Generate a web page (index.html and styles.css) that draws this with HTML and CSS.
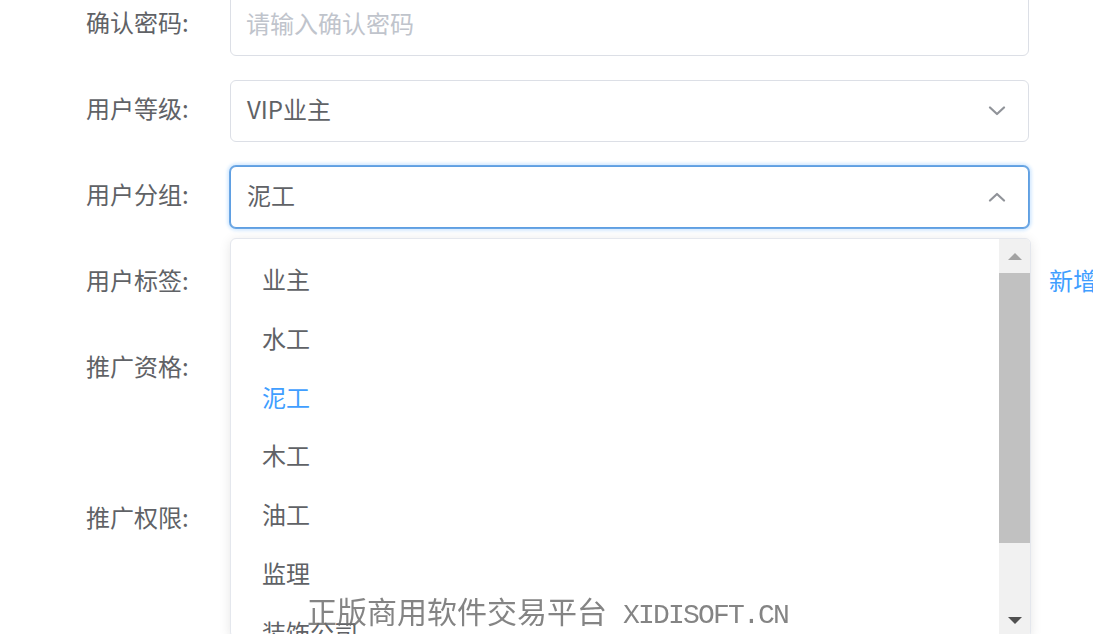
FILE: index.html
```html
<!DOCTYPE html>
<html lang="zh-CN">
<head>
    <meta charset="UTF-8" />
    <meta name="viewport" content="width=device-width, initial-scale=1.0"/>
    <title>编辑用户</title>
    <link rel="stylesheet" href="styles.css">
</head>
<body>
    <form class="user-form">
        <div class="form-row">
            <label class="form-label" for="confirmPassword">确认密码:</label>
            <div class="form-control">
                <input type="password" id="confirmPassword" class="text-input" placeholder="请输入确认密码" />
            </div>
        </div>

        <div class="form-row">
            <label class="form-label">用户等级:</label>
            <div class="form-control">
                <div class="select-box">
                    <span class="select-value">VIP业主</span>
                    <svg class="select-arrow" width="18" height="10" viewBox="0 0 18 10">
                        <polyline points="2,1.5 9,8 16,1.5" fill="none" stroke="#909399" stroke-width="2.2" stroke-linecap="round" stroke-linejoin="round"/>
                    </svg>
                </div>
            </div>
        </div>

        <div class="form-row">
            <label class="form-label">用户分组:</label>
            <div class="form-control">
                <div class="select-box is-focus">
                    <span class="select-value">泥工</span>
                    <svg class="select-arrow" width="18" height="10" viewBox="0 0 18 10">
                        <polyline points="2,8.5 9,2 16,8.5" fill="none" stroke="#909399" stroke-width="2.2" stroke-linecap="round" stroke-linejoin="round"/>
                    </svg>
                </div>

                <!-- open dropdown -->
                <div class="dropdown">
                    <ul class="dropdown-list">
                        <li class="dropdown-item">业主</li>
                        <li class="dropdown-item">水工</li>
                        <li class="dropdown-item selected">泥工</li>
                        <li class="dropdown-item">木工</li>
                        <li class="dropdown-item">油工</li>
                        <li class="dropdown-item">监理</li>
                        <li class="dropdown-item">装饰公司</li>
                    </ul>
                    <div class="scrollbar">
                        <div class="scroll-btn"><span class="tri-up"></span></div>
                        <div class="scroll-thumb"></div>
                        <div class="scroll-track"></div>
                        <div class="scroll-btn"><span class="tri-down"></span></div>
                    </div>
                </div>
            </div>
        </div>

        <div class="form-row">
            <label class="form-label">用户标签:</label>
            <div class="form-control">
                <div class="select-box"></div>
            </div>
            <a class="add-link" href="#">新增</a>
        </div>

        <div class="form-row tall">
            <label class="form-label">推广资格:</label>
            <div class="form-control"></div>
        </div>

        <div class="form-row">
            <label class="form-label">推广权限:</label>
            <div class="form-control"></div>
        </div>
    </form>

    <div class="watermark">正版商用软件交易平台<span class="watermark-latin">XIDISOFT.CN</span></div>
</body>
</html>
```

FILE: styles.css
```css
/* Reset and base styles */
* {
    box-sizing: border-box;
    margin: 0;
    padding: 0;
}

html, body {
    height: 634px;
    overflow: hidden;
}

body {
    font-family: "Noto Sans CJK SC", "Noto Sans", sans-serif;
    background-color: #ffffff;
    color: #606266;
}

.user-form {
    margin-top: -6px;
    padding-left: 86px;
}

.form-row {
    display: flex;
    align-items: flex-start;
    height: 62px;
    margin-bottom: 24px;
}

.form-row.tall {
    height: 127px;
}

.form-label {
    width: 144px;
    flex-shrink: 0;
    font-size: 24px;
    line-height: 56px;
    color: #606266;
}

.form-control {
    position: relative;
    flex-shrink: 0;
    width: 799px;
    height: 62px;
}

.text-input,
.select-box {
    width: 100%;
    height: 62px;
    padding: 0 15px 5px;
    border: 1px solid #dcdfe6;
    border-radius: 6px;
    background-color: #ffffff;
    font-family: inherit;
    font-size: 24px;
    color: #606266;
    outline: none;
}

.text-input::placeholder {
    color: #c0c4cc;
}

.select-box {
    display: flex;
    align-items: center;
    justify-content: space-between;
    padding: 0 22px 0 16px;
}

.select-box.is-focus {
    border-color: #5f9fe2;
    box-shadow: 0 0 0 1px #6aa6e4, 0 0 3px 3px rgba(64, 158, 255, 0.2);
}

.select-value {
    line-height: 1;
    margin-top: -5px;
}

.add-link {
    flex-shrink: 0;
    margin-left: 20px;
    font-size: 24px;
    line-height: 56px;
    color: #409eff;
    text-decoration: none;
    white-space: nowrap;
}

/* Dropdown panel */
.dropdown {
    position: absolute;
    top: 72px;
    left: 0;
    z-index: 10;
    display: flex;
    width: 801px;
    height: 400px;
    background-color: #ffffff;
    border: 1px solid #e4e7ed;
    border-radius: 6px;
    box-shadow: 0 2px 12px 0 rgba(0, 0, 0, 0.1);
    overflow: hidden;
}

.dropdown-list {
    flex: 1;
    list-style: none;
    padding-top: 11px;
    overflow: hidden;
}

.dropdown-item {
    height: 58.8px;
    padding: 0 31px;
    font-size: 24px;
    line-height: 58px;
    color: #606266;
}

.dropdown-item.selected {
    color: #409eff;
}

.scrollbar {
    display: flex;
    flex-direction: column;
    width: 31px;
    background-color: #f1f1f1;
}

.scroll-btn {
    display: flex;
    align-items: center;
    justify-content: center;
    height: 34px;
}

.scroll-thumb {
    height: 270px;
    background-color: #c1c1c1;
}

.scroll-track {
    flex: 1;
}

.tri-up {
    border-left: 7px solid transparent;
    border-right: 7px solid transparent;
    border-bottom: 7px solid #a3a3a3;
}

.tri-down {
    border-left: 7px solid transparent;
    border-right: 7px solid transparent;
    border-top: 7px solid #505050;
}

/* Watermark over the page */
.watermark {
    position: fixed;
    left: 307px;
    top: 594px;
    z-index: 20;
    font-size: 30px;
    line-height: 32px;
    color: rgba(110, 110, 110, 0.85);
    white-space: nowrap;
    pointer-events: none;
}

.watermark-latin {
    margin-left: 16px;
    font-family: "Liberation Mono", monospace;
    font-size: 28px;
    letter-spacing: -1.8px;
}
```
